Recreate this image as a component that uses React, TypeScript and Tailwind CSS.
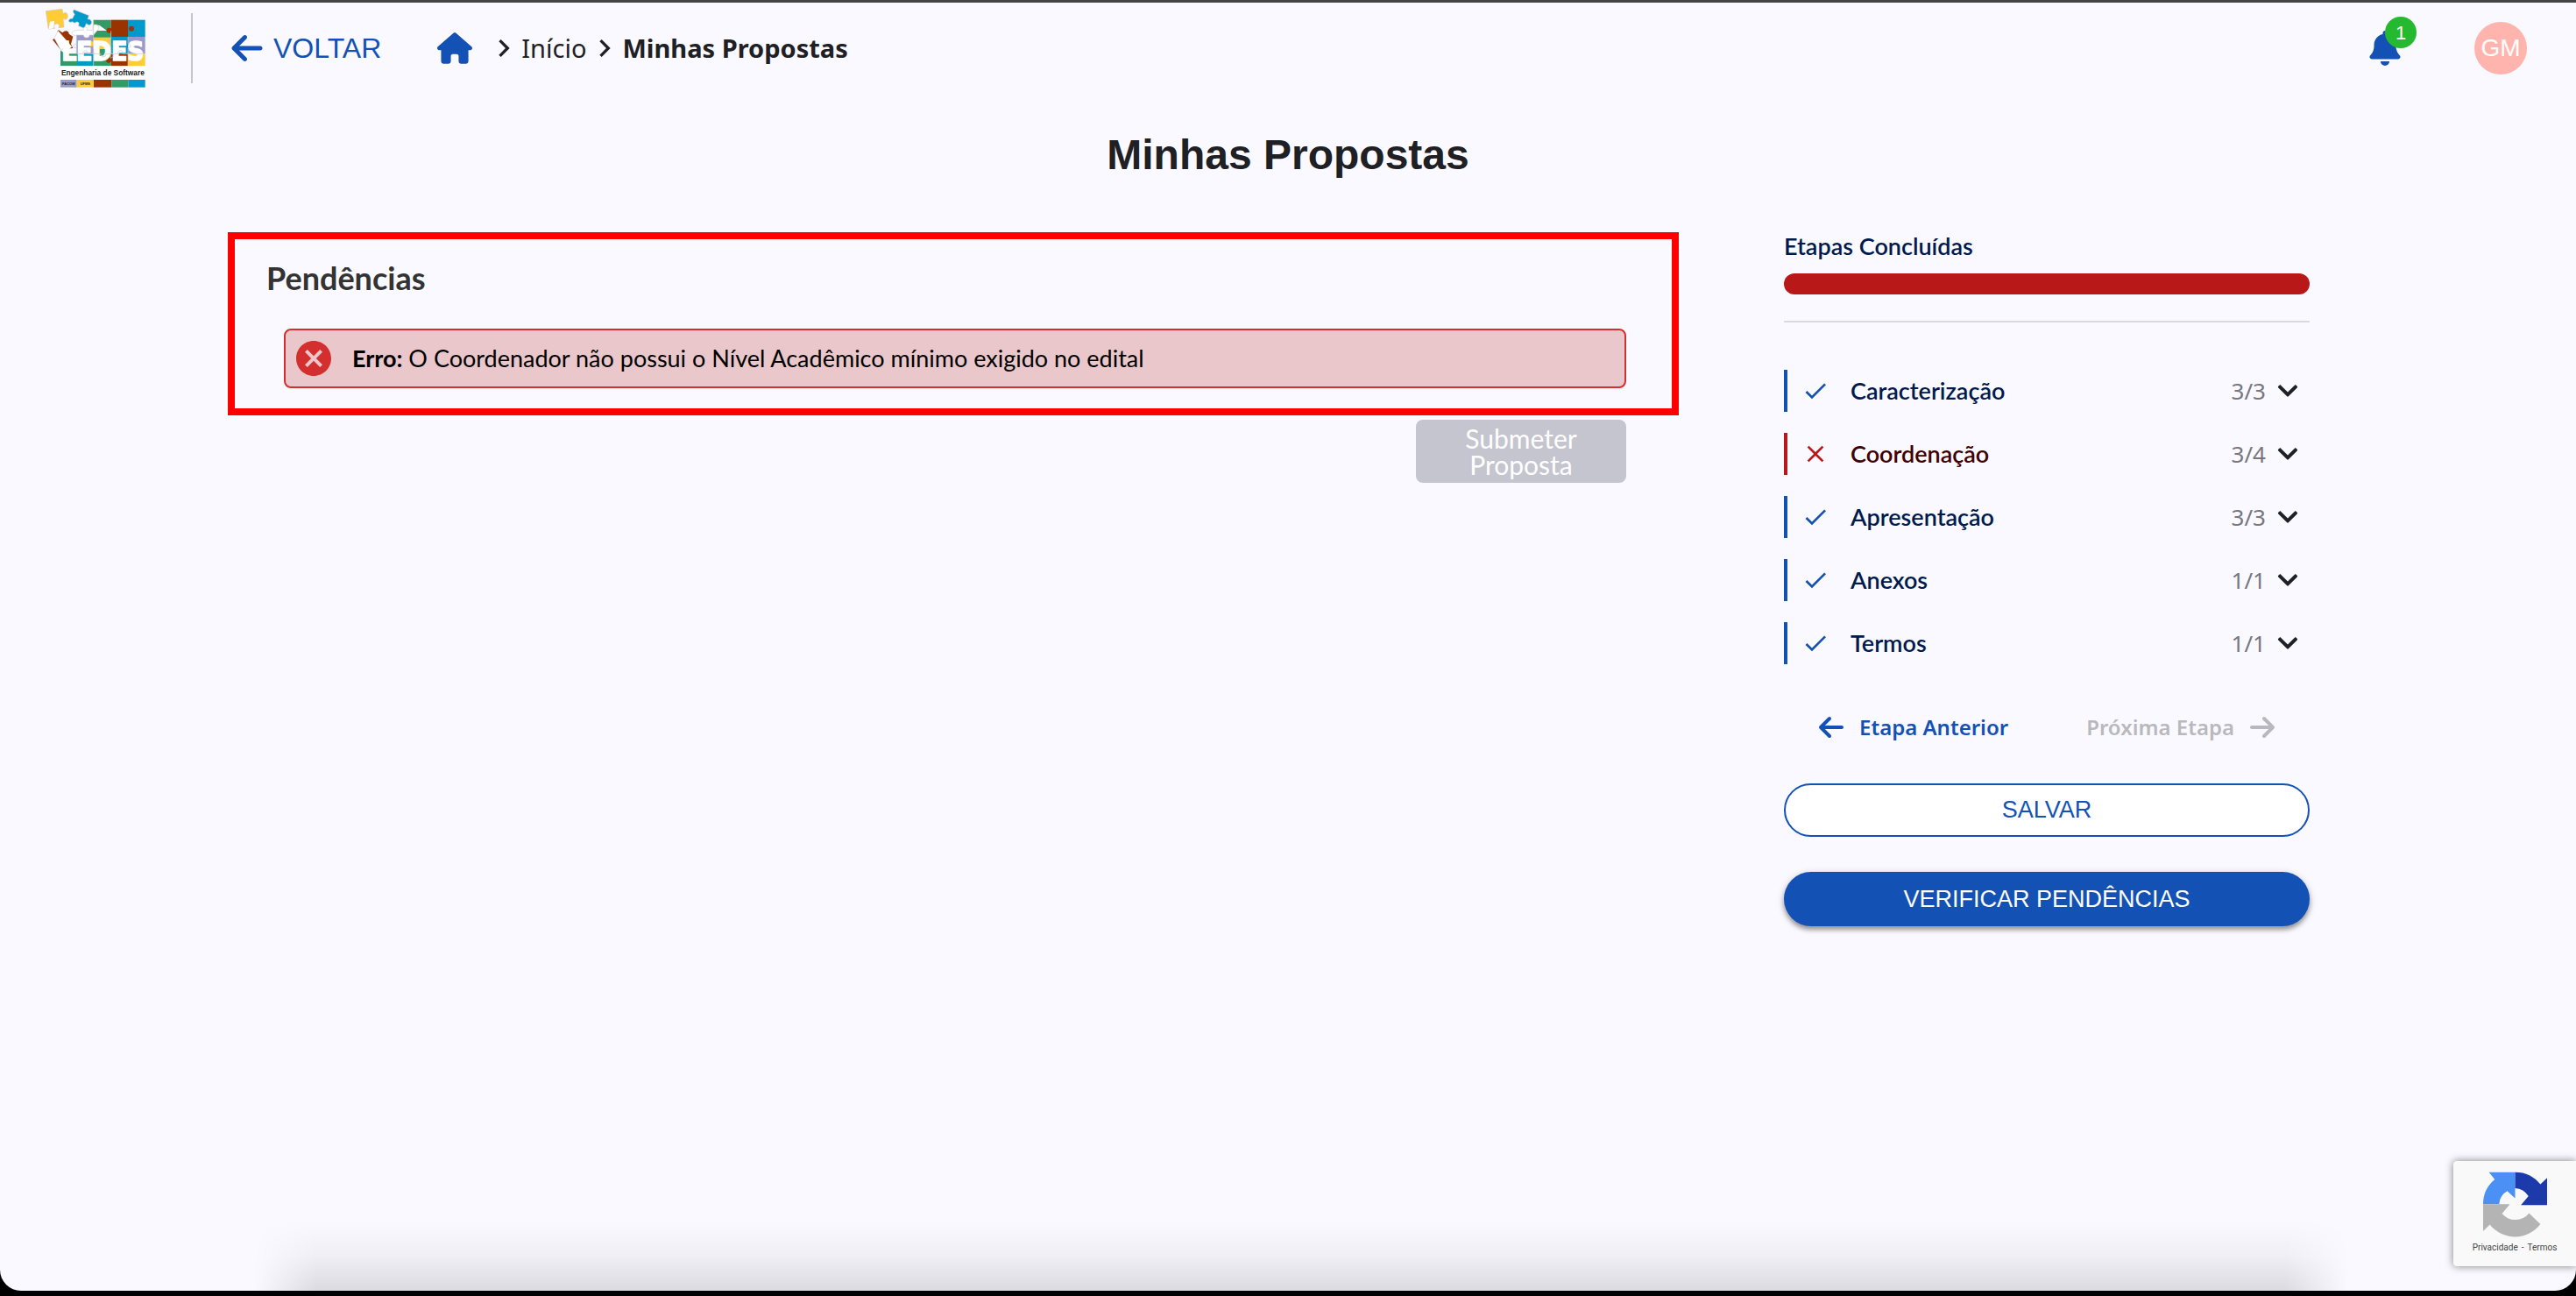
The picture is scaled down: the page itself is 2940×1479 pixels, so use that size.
import React from "react";
import { FaChevronDown } from "react-icons/fa";
import { FaArrowLeft, FaArrowRight, FaBell, FaHouse } from "react-icons/fa6";
import { MdCancel, MdCheck, MdChevronRight, MdClose } from "react-icons/md";

type Step = { name: string; count: string; ok: boolean };

const steps: Step[] = [
  { name: "Caracterização", count: "3/3", ok: true },
  { name: "Coordenação", count: "3/4", ok: false },
  { name: "Apresentação", count: "3/3", ok: true },
  { name: "Anexos", count: "1/1", ok: true },
  { name: "Termos", count: "1/1", ok: true },
];

function Logo() {
  return (
    <svg viewBox="150 24 354 282" className="h-[94px] w-[118px] shrink-0" role="img" aria-label="LEDES Engenharia de Software">
      {/* mosaic */}
      <path fill="#339966" d="M320 68H380V105H366L340 86H320Z" />
      <rect x="380" y="68" width="58" height="58" fill="#993300" />
      <rect x="438" y="68" width="59" height="58" fill="#0099cc" />
      <path fill="#9999cc" d="M262 118H320V184H262Z" />
      <rect x="320" y="105" width="60" height="24" fill="#339966" />
      <rect x="320" y="128" width="60" height="40" fill="#ffcc33" />
      <rect x="380" y="126" width="58" height="58" fill="#0099cc" />
      <rect x="438" y="126" width="59" height="58" fill="#9999cc" />
      <path fill="#339966" d="M207 172L222 184H264V226H207Z" />
      <rect x="264" y="184" width="56" height="42" fill="#0099cc" />
      <rect x="320" y="168" width="60" height="58" fill="#339966" />
      <rect x="380" y="184" width="58" height="42" fill="#993300" />
      <rect x="438" y="184" width="59" height="42" fill="#ffcc33" />
      <circle cx="450" cy="98" r="9" fill="#993300" />
      <circle cx="374" cy="104" r="9" fill="#993300" />
      <circle cx="312" cy="150" r="9" fill="#ffcc33" />
      <circle cx="372" cy="206" r="9" fill="#993300" />
      {/* loose pieces */}
      <path fill="#ffcc33" stroke="#c9c9c9" strokeWidth="2" d="M157 38L213 31L216 48C222 40 232 44 232 55C232 67 222 70 216 62L219 93L201 95C206 84 198 78 188 83C183 88 186 94 188 97L166 99Z" />
      <path fill="#fff" d="M171 74L186 72L184 97L167 99Z" />
      <path fill="#0099cc" stroke="#c9c9c9" strokeWidth="2" d="M253 33L304 53L300 66C309 64 315 71 313 80C309 88 301 86 296 80L288 97L268 88C275 78 265 70 256 79L247 74C237 79 232 72 238 66C242 62 248 64 248 64L256 48C250 44 249 38 253 33Z" />
      <path fill="#993300" d="M200 103L214 112C222 102 236 104 236 116L250 125L243 151L250 165L240 166L196 108Z" />
      <path fill="#993300" d="M180 136L186 132L212 166L206 169Z" />
      <path fill="#fff" stroke="#d0d0d0" strokeWidth="2" d="M186 130L199 106L246 160L226 175C220 165 208 168 207 170Z" />
      <path fill="#fff" stroke="#d0d0d0" strokeWidth="2" d="M264 103H286C280 90 304 90 298 103H318V86C326 82 340 84 338 98L320 120H306C308 132 286 132 286 120H264C252 126 240 112 252 106Z" />
      {/* word mark */}
      <text x="352" y="207" fill="#fff" stroke="#fff" strokeWidth="5" fontSize="88" fontWeight="700" textAnchor="middle" fontFamily="'DejaVu Sans Condensed', 'Liberation Sans', sans-serif">
        LEDES
      </text>
      <path fill="none" stroke="#c4c4c4" strokeWidth="2" d="M262 184V162C250 168 246 150 262 152V126M320 68V128M320 165V226M380 105V132C368 130 368 152 380 148V184C392 182 392 196 380 198M438 126V150C450 148 450 166 438 164V226M264 184H284C282 170 304 170 300 184H345C342 198 366 198 362 184H404C402 170 424 170 420 184H497" />
      <rect x="207" y="226" width="290" height="46" fill="#fff" />
      <text x="352" y="259" fill="#222" fontSize="25" fontWeight="700" textAnchor="middle" fontFamily="'Liberation Sans Narrow', 'Liberation Sans', sans-serif">
        Engenharia de Software
      </text>
      <rect x="207" y="273" width="56" height="26" fill="#9999cc" />
      <rect x="263" y="273" width="58" height="26" fill="#ffcc33" />
      <rect x="321" y="273" width="61" height="26" fill="#993300" />
      <rect x="382" y="273" width="58" height="26" fill="#339966" />
      <rect x="440" y="273" width="57" height="26" fill="#0099cc" />
      <text x="235" y="291" fill="#222" fontSize="12" fontWeight="700" textAnchor="middle" fontFamily="'Liberation Sans', sans-serif">
        FACOM
      </text>
      <text x="292" y="291" fill="#222" fontSize="12" fontWeight="700" textAnchor="middle" fontFamily="'Liberation Sans', sans-serif">
        UFMS
      </text>
    </svg>
  );
}

function RecaptchaMark() {
  return (
    <svg viewBox="218 113 224 226" className="size-[75px]" aria-hidden="true">
      <path fill="#4a90f5" d="M220 225A110 110 0 0 1 260 140L240 115H330V205L303 180A55 55 0 0 0 275 225Z" />
      <path fill="#1c3aa9" d="M330 115A110 110 0 0 1 417 157L440 135V228H350L376 197A60 60 0 0 0 330 170Z" />
      <path fill="#b4b4b4" d="M220 225H312L285 258A60 60 0 0 0 378 256L417 294A110 110 0 0 1 243 295L220 318Z" />
    </svg>
  );
}

function Header() {
  return (
    <header className="flex h-[104px] items-center pr-14 pl-[50px] text-[#1f2024]">
      <Logo />
      <div className="ml-[50px] h-20 w-[2px] bg-[#c6c6c9]" />
      <a href="#voltar" className="ml-11 flex items-center gap-3 font-['Liberation_Sans',sans-serif] text-[32px] text-[#1351b4]">
        <FaArrowLeft className="h-10 w-9" />
        VOLTAR
      </a>
      <nav aria-label="Navegação" className="ml-16 flex items-center font-['Noto_Sans',sans-serif] text-[29px]">
        <a href="#home" aria-label="Página inicial" className="mr-4 text-[#1351b4]">
          <FaHouse className="size-10" />
        </a>
        <MdChevronRight className="size-10" />
        <a href="#inicio">Início</a>
        <MdChevronRight className="ml-px size-10" />
        <span className="font-bold">Minhas Propostas</span>
      </nav>
      <div className="ml-auto flex items-center gap-[84px] font-['Liberation_Sans',sans-serif]">
        <button type="button" aria-label="Notificações" className="relative text-[#1351b4]">
          <FaBell className="h-10 w-9" />
          <span className="absolute -top-4 left-[18px] flex size-9 items-center justify-center rounded-full bg-[#24b92f] text-[22px] text-white">1</span>
        </button>
        <button type="button" className="flex size-[60px] items-center justify-center rounded-full bg-[#ffb5ad] text-[28px] text-white">GM</button>
      </div>
    </header>
  );
}

function StepRow({ step }: { step: Step }) {
  return (
    <li>
      <button
        type="button"
        className={
          step.ok
            ? "flex h-12 w-full items-center border-l-4 border-[#1351b4] pr-3 pl-4 text-[#001a4d]"
            : "flex h-12 w-full items-center border-l-4 border-[#b81818] pr-3 pl-4 text-[#410002]"
        }
      >
        {step.ok ? <MdCheck className="size-8 text-[#1351b4]" /> : <MdClose className="size-8 text-[#b81818]" />}
        <span className="ml-6 font-semibold">{step.name}</span>
        <span className="ml-auto font-['Noto_Sans',sans-serif] text-[26px] text-[#77777f]">{step.count}</span>
        <FaChevronDown className="ml-3 size-[26px] text-[#1f2024]" />
      </button>
    </li>
  );
}

export default function App() {
  return (
    <div className="bg-black">
      <div className="relative flex min-h-[calc(100vh-6px)] flex-col overflow-hidden rounded-b-3xl border-t-[3px] border-[#444] bg-[#f9f9ff] font-['Lato',sans-serif]">
        <Header />
        <h1 className="mt-[42px] text-center font-['Liberation_Sans',sans-serif] text-5xl leading-[56px] font-bold text-[#1f2024]">Minhas Propostas</h1>
        <main className="mt-[60px] flex items-start gap-[120px] pr-[304px] pl-[260px]">
          <div className="flex grow flex-col">
            <section className="border-8 border-[#ff0000] px-9 pt-6 pb-[23px]">
              <h2 className="text-4xl leading-10 font-bold text-[#333]">Pendências</h2>
              <div role="alert" className="mt-[38px] mr-4 ml-5 flex h-[68px] items-center rounded-lg border-2 border-[#d32f2f] bg-[#e9c7cb] px-2 text-[27px] text-black">
                <MdCancel className="size-12 shrink-0 text-[#d32f2f]" />
                <p className="ml-5">
                  <b>Erro:</b> O Coordenador não possui o Nível Acadêmico mínimo exigido no edital
                </p>
              </div>
            </section>
            <button type="button" disabled className="mt-[5px] mr-[60px] h-[72px] w-60 self-end rounded-lg bg-[#c5c5cf] px-8 text-[30px] leading-[30px] text-white">
              Submeter Proposta
            </button>
          </div>
          <aside className="w-[600px] shrink-0 text-[27px]">
            <h2 id="progress" className="leading-8 font-semibold text-[#001a4d]">Etapas Concluídas</h2>
            <div role="progressbar" aria-labelledby="progress" aria-valuenow={100} className="mt-[15px] h-6 rounded-full bg-[#b81818]" />
            <hr className="mt-[30px] border-t-2 border-[#d9d9df]" />
            <ul className="mt-[54px] flex flex-col gap-6">
              {steps.map((s) => (
                <StepRow key={s.name} step={s} />
              ))}
            </ul>
            <div className="mt-12 flex h-12 items-center justify-between px-10 font-['Noto_Sans',sans-serif] text-2xl font-semibold">
              <button type="button" className="flex items-center gap-[18px] text-[#1351b4]">
                <FaArrowLeft className="h-8 w-7" />
                Etapa Anterior
              </button>
              <button type="button" disabled className="flex items-center gap-[18px] text-[#b9b9bd]">
                Próxima Etapa
                <FaArrowRight className="h-8 w-7" />
              </button>
            </div>
            <div className="mt-10 flex flex-col gap-10 font-['Liberation_Sans',sans-serif] text-[27px]">
              <button type="button" className="h-[61px] rounded-full border-2 border-[#1351b4] bg-white text-[#1351b4]">SALVAR</button>
              <button type="button" className="h-[62px] rounded-full bg-[#1351b4] text-white shadow-[0_4px_5px_rgba(0,0,0,0.3),0_2px_10px_rgba(0,0,0,0.2)]">VERIFICAR PENDÊNCIAS</button>
            </div>
          </aside>
        </main>
        <div aria-hidden="true" className="absolute right-[260px] bottom-0 left-[290px] h-20 bg-linear-to-t from-black/12 via-black/4 to-transparent mask-x-from-97%" />
        <div className="absolute right-0 bottom-7 flex h-[120px] w-[140px] flex-col items-center rounded-l-sm bg-[#f9f9f9] pt-3 font-['Roboto',sans-serif] text-[10px] text-[#444] shadow-[0_0_10px_rgba(0,0,0,0.5)]">
          <RecaptchaMark />
          <p className="mt-1 flex gap-1">
            <a href="#privacidade">Privacidade</a>
            <span>-</span>
            <a href="#termos">Termos</a>
          </p>
        </div>
      </div>
      <div className="h-[6px]" />
    </div>
  );
}
